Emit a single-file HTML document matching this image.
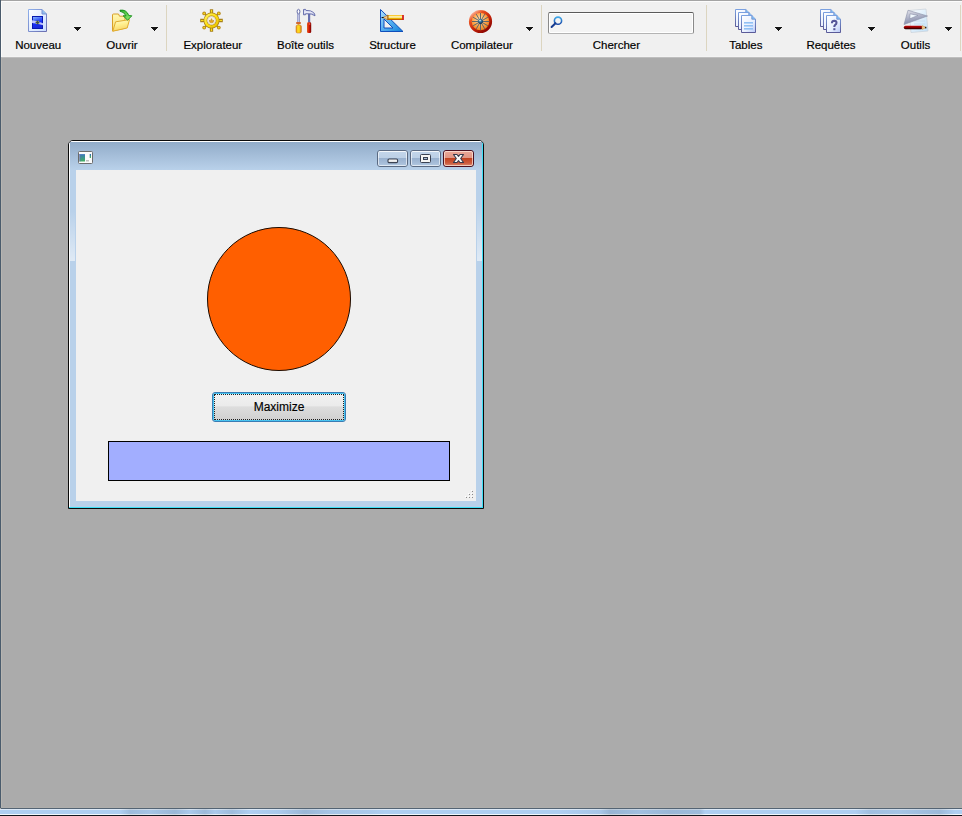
<!DOCTYPE html>
<html><head><meta charset="utf-8">
<style>
html,body{margin:0;padding:0;}
body{width:962px;height:816px;position:relative;overflow:hidden;background:#ababab;font-family:"Liberation Sans",sans-serif;}
.a{position:absolute;}
.lbl{position:absolute;top:38px;font-size:11.5px;line-height:14px;color:#000;-webkit-text-stroke:0.18px #000;white-space:nowrap;text-align:center;width:100px;}
.sep{position:absolute;top:5px;width:1px;height:46px;background:#dcd5c0;}
.dd{position:absolute;top:26px;width:9px;height:6px;}
.dd svg{display:block;}
svg{display:block;}
.tb{width:29px;height:15px;border:1px solid #5a6a82;border-radius:3px;background:linear-gradient(#c3d6eb 0%,#bcd0e6 46%,#98b1cf 47%,#a6bdd8 80%,#b4cae2 100%);}
.tbi{position:absolute;left:0;top:0;right:0;bottom:0;border:1px solid rgba(255,255,255,0.6);border-top-color:rgba(255,255,255,0.8);border-radius:2px;}
.tbc{width:29px;height:15px;border:1px solid #4a1020;border-radius:3px;background:linear-gradient(#eaa898 0%,#e09584 46%,#c0401e 47%,#cc5a3c 80%,#da8a70 100%);}
.tbci{position:absolute;left:0;top:0;right:0;bottom:0;border:1px solid rgba(255,235,225,0.7);border-radius:2px;}
</style></head><body>
<!-- toolbar -->
<div class="a" style="left:0;top:0;width:962px;height:57px;background:#f0f0f0;"></div>
<div class="a" style="left:0;top:0;width:962px;height:1px;background:#a4a4a4;"></div>
<div class="a" style="left:0;top:1px;width:962px;height:1px;background:#fcfcfc;"></div>
<div class="a" style="left:0;top:56px;width:962px;height:1px;background:#f3f3f3;"></div>
<div class="a" style="left:0;top:57px;width:962px;height:1px;background:#bebebe;"></div>
<div class="a" style="left:1px;top:1px;width:1px;height:56px;background:#fbfaf8;"></div>
<!-- MDI edges -->
<div class="a" style="left:1px;top:58px;width:1px;height:750px;background:#b7b5b1;"></div>
<div class="a" style="left:1px;top:807px;width:961px;height:1px;background:#afaeab;"></div>
<div class="a" style="left:0;top:0;width:1px;height:808px;background:#4a5b6c;"></div>
<!-- bottom frame -->
<div class="a" style="left:1px;top:808px;width:961px;height:1px;background:#546474;"></div>
<div class="a" style="left:0;top:809px;width:962px;height:1px;background:#dce9f7;"></div>
<div class="a" style="left:0;top:810px;width:962px;height:4px;background:#afcff2;"></div>
<div class="a" style="left:0;top:814px;width:962px;height:1px;background:#f2f8fd;"></div>
<div class="a" style="left:0;top:815px;width:962px;height:1px;background:#141820;"></div>
<div class="a" style="left:0;top:809px;width:962px;height:6px;background:linear-gradient(90deg, rgba(80,100,120,0) 0px, rgba(80,100,120,0) 120px, rgba(80,100,120,0.18) 130px, rgba(80,100,120,0.1) 150px, rgba(80,100,120,0.22) 175px, rgba(80,100,120,0.05) 190px, rgba(80,100,120,0.2) 205px, rgba(80,100,120,0.05) 215px, rgba(80,100,120,0.18) 232px, rgba(80,100,120,0) 250px, rgba(80,100,120,0.05) 280px, rgba(80,100,120,0.22) 305px, rgba(80,100,120,0.1) 330px, rgba(80,100,120,0.05) 370px, rgba(80,100,120,0) 385px, rgba(80,100,120,0) 560px, rgba(80,100,120,0.08) 600px, rgba(80,100,120,0.25) 610px, rgba(80,100,120,0.15) 640px, rgba(80,100,120,0.22) 670px, rgba(80,100,120,0.18) 700px, rgba(80,100,120,0) 705px, rgba(80,100,120,0) 855px, rgba(80,100,120,0.15) 870px, rgba(80,100,120,0.1) 900px, rgba(80,100,120,0.2) 940px, rgba(80,100,120,0) 955px);"></div>

<!-- separators -->
<div class="sep" style="left:166px"></div>
<div class="sep" style="left:541px"></div>
<div class="sep" style="left:706px"></div>
<div class="sep" style="left:960px"></div>

<!-- dropdown arrows -->
<div class="dd" style="left:73px"><svg width="9" height="6" viewBox="0 0 9 6"><path d="M0.5,0.5 H8.5 L4.5,5.5 Z" fill="#fff" opacity="0.8"/><path d="M1,1 H8 V2 H7 V3 H6 V4 H5 V5 H4 V4 H3 V3 H2 V2 H1 Z" fill="#141414"/></svg></div>
<div class="dd" style="left:150px"><svg width="9" height="6" viewBox="0 0 9 6"><path d="M0.5,0.5 H8.5 L4.5,5.5 Z" fill="#fff" opacity="0.8"/><path d="M1,1 H8 V2 H7 V3 H6 V4 H5 V5 H4 V4 H3 V3 H2 V2 H1 Z" fill="#141414"/></svg></div>
<div class="dd" style="left:525px"><svg width="9" height="6" viewBox="0 0 9 6"><path d="M0.5,0.5 H8.5 L4.5,5.5 Z" fill="#fff" opacity="0.8"/><path d="M1,1 H8 V2 H7 V3 H6 V4 H5 V5 H4 V4 H3 V3 H2 V2 H1 Z" fill="#141414"/></svg></div>
<div class="dd" style="left:774px"><svg width="9" height="6" viewBox="0 0 9 6"><path d="M0.5,0.5 H8.5 L4.5,5.5 Z" fill="#fff" opacity="0.8"/><path d="M1,1 H8 V2 H7 V3 H6 V4 H5 V5 H4 V4 H3 V3 H2 V2 H1 Z" fill="#141414"/></svg></div>
<div class="dd" style="left:867px"><svg width="9" height="6" viewBox="0 0 9 6"><path d="M0.5,0.5 H8.5 L4.5,5.5 Z" fill="#fff" opacity="0.8"/><path d="M1,1 H8 V2 H7 V3 H6 V4 H5 V5 H4 V4 H3 V3 H2 V2 H1 Z" fill="#141414"/></svg></div>
<div class="dd" style="left:944px"><svg width="9" height="6" viewBox="0 0 9 6"><path d="M0.5,0.5 H8.5 L4.5,5.5 Z" fill="#fff" opacity="0.8"/><path d="M1,1 H8 V2 H7 V3 H6 V4 H5 V5 H4 V4 H3 V3 H2 V2 H1 Z" fill="#141414"/></svg></div>

<!-- labels -->
<div class="lbl" style="left:-11.8px">Nouveau</div>
<div class="lbl" style="left:72px">Ouvrir</div>
<div class="lbl" style="left:162.8px">Explorateur</div>
<div class="lbl" style="left:255.5px">Boîte outils</div>
<div class="lbl" style="left:342.5px">Structure</div>
<div class="lbl" style="left:431.9px">Compilateur</div>
<div class="lbl" style="left:566.4px">Chercher</div>
<div class="lbl" style="left:695.8px">Tables</div>
<div class="lbl" style="left:781px">Requêtes</div>
<div class="lbl" style="left:865.5px">Outils</div>


<!-- search box -->
<div class="a" style="left:548px;top:12px;width:144px;height:20px;border-radius:2px;border-top:1px solid #5a5a5a;border-left:1px solid #8a8a8a;border-right:1px solid #8a8a8a;border-bottom:1px solid #b4b4b4;background:#f4f4f4;box-shadow:inset 1px 1px 0 #fff,inset -1px -1px 0 #fff;"></div>

<!-- ICON Nouveau -->
<svg class="a" style="left:28px;top:9px" width="20" height="24" viewBox="0 0 20 24">
  <defs>
    <linearGradient id="nvd" x1="0" y1="0" x2="1" y2="1"><stop offset="0" stop-color="#ffffff"/><stop offset="1" stop-color="#c8dcff"/></linearGradient>
    <linearGradient id="nvb" x1="0" y1="0" x2="0.3" y2="1"><stop offset="0" stop-color="#90c4ff"/><stop offset="0.4" stop-color="#3a5cf8"/><stop offset="0.6" stop-color="#1830f8"/><stop offset="1" stop-color="#1828d8"/></linearGradient>
    <linearGradient id="nvs" x1="0" y1="0" x2="1" y2="1"><stop offset="0" stop-color="#8eb0ec"/><stop offset="1" stop-color="#6a6eb0"/></linearGradient>
  </defs>
  <path d="M0.5,0.5 H14 L18.5,5 V22.5 H0.5 Z" fill="url(#nvd)" stroke="url(#nvs)"/>
  <path d="M14,0.5 V5 H18.5" fill="#90c0f0" stroke="#7890d0"/>
  <rect x="4.5" y="7.5" width="10" height="12" fill="url(#nvb)" stroke="#0818b0"/>
  <path d="M4,11.3 Q9.5,11.8 15,14.2 V16.2 Q9.5,14.3 4,14 Z" fill="#d0d4ff" opacity="0.9"/>
  <circle cx="9.5" cy="13.4" r="1.9" fill="#3a4858"/>
  <g fill="#b0c050"><rect x="8" y="12" width="0.9" height="0.9"/><rect x="10.2" y="12" width="0.9" height="0.9"/><rect x="8" y="14" width="0.9" height="0.9"/><rect x="10.2" y="14" width="0.9" height="0.9"/></g>
</svg>
<!-- ICON Ouvrir -->
<svg class="a" style="left:111px;top:8px" width="22" height="24" viewBox="0 0 22 24">
  <defs>
    <linearGradient id="ofb" x1="0" y1="0" x2="0" y2="1"><stop offset="0" stop-color="#fff8b0"/><stop offset="1" stop-color="#f8dc78"/></linearGradient>
    <linearGradient id="off" x1="0" y1="0" x2="0.3" y2="1"><stop offset="0" stop-color="#fffcd8"/><stop offset="0.5" stop-color="#fff090"/><stop offset="1" stop-color="#f8d468"/></linearGradient>
    <linearGradient id="oar" x1="0" y1="0" x2="1" y2="1"><stop offset="0" stop-color="#30b030"/><stop offset="1" stop-color="#98f070"/></linearGradient>
  </defs>
  <path d="M1.5,23 V7 Q1.5,6 2.5,6 H7.5 L8.5,8.2 H14 V13 L15,20 Z" fill="url(#ofb)" stroke="#d8a028"/>
  <path d="M1.8,23.2 L4.6,13.8 L18.5,11.6 L16.2,20 Z" fill="url(#off)" stroke="#e0ac30" stroke-dasharray="none"/>
  <path d="M9,2.2 Q15.5,1.2 17.8,7.6 L20.8,7.8 L16.6,12.2 L12.2,7.8 L15,7.8 Q13,3.8 9,3.2 Z" fill="url(#oar)" stroke="#0a8a10" stroke-width="0.9" stroke-linejoin="round"/>
</svg>
<!-- ICON Explorateur -->
<svg class="a" style="left:199px;top:8px" width="26" height="26" viewBox="0 0 26 26">
  <defs><linearGradient id="exg" x1="0" y1="0" x2="1" y2="1"><stop offset="0" stop-color="#fff060"/><stop offset="0.5" stop-color="#ffe010"/><stop offset="1" stop-color="#e8c000"/></linearGradient></defs>
  <g stroke="#a88018" stroke-width="3.3" stroke-linecap="butt">
    <path d="M12.5,1.2 V6 M12.5,19 V23.8 M1.2,12.5 H6 M19,12.5 H23.8"/>
  </g>
  <g stroke="#a88018" stroke-width="1.4"><path d="M5.5,5.5 L8,8 M19.5,5.5 L17,8 M5.5,19.5 L8,17 M19.5,19.5 L17,17"/></g>
  <g fill="#b88a18"><circle cx="5.2" cy="5.4" r="1.9"/><circle cx="19.8" cy="5.4" r="1.9"/><circle cx="5.2" cy="19.6" r="1.9"/><circle cx="19.8" cy="19.6" r="1.9"/></g>
  <g fill="#f8d820"><circle cx="5.2" cy="5.4" r="0.9"/><circle cx="19.8" cy="5.4" r="0.9"/><circle cx="5.2" cy="19.6" r="0.9"/><circle cx="19.8" cy="19.6" r="0.9"/></g>
  <g stroke="#f8dc20" stroke-width="1.2">
    <path d="M12.5,2 V5.5 M12.5,19.5 V23 M2,12.5 H5.5 M19.5,12.5 H23"/>
  </g>
  <circle cx="12.5" cy="12.5" r="6.1" fill="none" stroke="#a88018" stroke-width="3.8"/>
  <circle cx="12.5" cy="12.5" r="6.1" fill="none" stroke="url(#exg)" stroke-width="2.4"/>
  <circle cx="12.5" cy="12.5" r="4" fill="#f2efe6"/>
  <circle cx="12.5" cy="12.5" r="4" fill="none" stroke="#d8c090" stroke-width="0.5"/>
  <path d="M10.3,12 L11.3,13.2 L12.5,10.6 L13.7,13.2 L14.7,12 L14.2,14.3 Q12.5,15.2 10.8,14.3 Z" fill="#e8a818" stroke="#b88010" stroke-width="0.5"/>
</svg>
<!-- ICON Boite outils -->
<svg class="a" style="left:294px;top:8px" width="24" height="26" viewBox="0 0 24 26">
  <defs>
    <linearGradient id="bsh" x1="0" y1="0" x2="1" y2="0"><stop offset="0" stop-color="#8088c0"/><stop offset="0.5" stop-color="#c0c4e4"/><stop offset="1" stop-color="#7078b0"/></linearGradient>
    <linearGradient id="byl" x1="0" y1="0" x2="1" y2="0"><stop offset="0" stop-color="#e08820"/><stop offset="0.35" stop-color="#ffe020"/><stop offset="0.7" stop-color="#f8c818"/><stop offset="1" stop-color="#c86810"/></linearGradient>
    <linearGradient id="brd" x1="0" y1="0" x2="1" y2="0"><stop offset="0" stop-color="#e06020"/><stop offset="0.5" stop-color="#d81808"/><stop offset="1" stop-color="#700000"/></linearGradient>
    <linearGradient id="bhm" x1="0" y1="0" x2="0" y2="1"><stop offset="0" stop-color="#b8bce0"/><stop offset="0.45" stop-color="#eeeefa"/><stop offset="1" stop-color="#9098c8"/></linearGradient>
  </defs>
  <rect x="3.2" y="5" width="2.6" height="9" fill="url(#bsh)"/>
  <ellipse cx="4.5" cy="3.6" rx="1.4" ry="2.3" fill="#f0f0f8" stroke="#6870a8" stroke-width="1"/>
  <rect x="4.1" y="2.3" width="0.8" height="2.4" fill="#ffffff"/>
  <rect x="2" y="14" width="5" height="2" rx="0.9" fill="#d06830"/>
  <rect x="3.6" y="16" width="1.8" height="1.2" fill="#e8b040"/>
  <rect x="2" y="17" width="5.4" height="8" rx="1.5" fill="url(#byl)" stroke="#c87018" stroke-width="0.5"/>
  <rect x="14" y="6" width="2.2" height="8.5" fill="#6870b0"/>
  <path d="M9.5,1.5 L11.4,1.3 L12,2.4 Q17,2.2 19.6,4.5 Q21,6 21,7.8 L19.4,7.1 Q18,5.9 15,5.8 L11.6,5.8 L11.4,6.8 L9.5,6.8 Z" fill="url(#bhm)" stroke="#6068a8" stroke-width="0.9" stroke-linejoin="round"/>
  <rect x="13" y="14.2" width="4.2" height="10.8" rx="1.3" fill="url(#brd)"/>
  <circle cx="15.6" cy="16" r="0.9" fill="#ff6040" opacity="0.8"/>
</svg>
<!-- ICON Structure -->
<svg class="a" style="left:379px;top:8px" width="28" height="26" viewBox="0 0 28 26">
  <defs>
    <linearGradient id="stg" x1="0" y1="0" x2="1" y2="1"><stop offset="0" stop-color="#b0e0ff"/><stop offset="0.5" stop-color="#58b0f0"/><stop offset="1" stop-color="#1080d8"/></linearGradient>
    <linearGradient id="spn" x1="0" y1="0" x2="0" y2="1"><stop offset="0" stop-color="#f8b800"/><stop offset="0.4" stop-color="#ffffd8"/><stop offset="0.7" stop-color="#e8b000"/><stop offset="1" stop-color="#b03000"/></linearGradient>
  </defs>
  <path d="M1.5,1.5 L24,23.5 H1.5 Z M5,11 V20 H14 Z" fill="url(#stg)" fill-rule="evenodd" stroke="#0848b8" stroke-width="0.95" stroke-linejoin="round"/>
  <rect x="8.5" y="7" width="15" height="5" fill="url(#spn)"/>
  <rect x="23.2" y="7" width="1.6" height="5" fill="#d00808"/>
  <path d="M9,7 L4,9.5 L9,12 Z" fill="#f0c890" stroke="#a86818" stroke-width="0.6"/>
  <rect x="8.4" y="7" width="0.9" height="5" fill="#a06010"/>
  <rect x="2.6" y="9" width="2" height="1.1" fill="#101010"/>
</svg>
<!-- ICON Compilateur -->
<svg class="a" style="left:468px;top:9px" width="25" height="25" viewBox="0 0 25 25">
  <defs>
    <radialGradient id="cpi" cx="0.45" cy="0.4" r="0.6"><stop offset="0" stop-color="#ffe4b8"/><stop offset="0.5" stop-color="#ffa850"/><stop offset="0.82" stop-color="#f08828"/><stop offset="1" stop-color="#985810"/></radialGradient>
    <linearGradient id="cpr" x1="0.1" y1="0" x2="0.9" y2="1"><stop offset="0" stop-color="#ffc8b0"/><stop offset="0.25" stop-color="#e85020"/><stop offset="0.6" stop-color="#c02008"/><stop offset="1" stop-color="#800000"/></linearGradient>
    <radialGradient id="cph" cx="0.4" cy="0.3" r="0.7"><stop offset="0" stop-color="#ffffff"/><stop offset="0.35" stop-color="#4080a8"/><stop offset="1" stop-color="#0a2848"/></radialGradient>
  </defs>
  <circle cx="12.5" cy="12.5" r="10.2" fill="url(#cpi)" stroke="url(#cpr)" stroke-width="2.8"/>
  <g stroke="#4a6070" stroke-width="0.9">
    <path d="M12.5,4 V21 M4,12.5 H21 M8.25,5.14 L16.75,19.86 M16.75,5.14 L8.25,19.86 M5.14,8.25 L19.86,16.75 M5.14,16.75 L19.86,8.25"/>
  </g>
  <circle cx="12.5" cy="12.5" r="2.4" fill="url(#cph)"/>
</svg>
<!-- ICON search magnifier -->
<svg class="a" style="left:550px;top:16px" width="14" height="14" viewBox="0 0 14 14">
  <defs><linearGradient id="mgg" x1="0" y1="0" x2="0" y2="1"><stop offset="0" stop-color="#40a8e8"/><stop offset="1" stop-color="#1848a8"/></linearGradient></defs>
  <circle cx="8" cy="4.7" r="3.6" fill="none" stroke="url(#mgg)" stroke-width="1.6"/>
  <path d="M5.5,7.2 L1.6,11" stroke="#183c90" stroke-width="2" stroke-linecap="round"/>
</svg>
<!-- ICON Tables -->
<svg class="a" style="left:734px;top:8px" width="24" height="26" viewBox="0 0 24 26">
  <defs>
    <linearGradient id="pgf" x1="0" y1="0" x2="1" y2="1"><stop offset="0" stop-color="#ffffff"/><stop offset="0.6" stop-color="#e8f0ff"/><stop offset="1" stop-color="#b8c8f8"/></linearGradient>
    <linearGradient id="pgs" x1="0" y1="0" x2="0" y2="1"><stop offset="0" stop-color="#7aa0e0"/><stop offset="1" stop-color="#5a5a98"/></linearGradient>
    <g id="page">
      <path d="M0.5,0.5 H10.8 L14.5,4.2 V17.5 H0.5 Z" fill="url(#pgf)" stroke="url(#pgs)" stroke-width="1"/>
      <path d="M10.8,0.5 V4.2 H14.5" fill="#80c0f8" stroke="#6a88c8" stroke-width="0.8"/>
    </g>
  </defs>
  <use href="#page" x="1" y="1"/>
  <use href="#page" x="4" y="4"/>
  <use href="#page" x="7" y="7"/>
  <g fill="#90c0f4"><rect x="10" y="14" width="9" height="1.6"/><rect x="10" y="17" width="9" height="1.6"/><rect x="10" y="20" width="9" height="1.6"/></g>
</svg>
<!-- ICON Requetes -->
<svg class="a" style="left:819px;top:8px" width="24" height="26" viewBox="0 0 24 26">
  <use href="#page" x="1" y="1"/>
  <use href="#page" x="4" y="4"/>
  <use href="#page" x="7" y="7"/>
  <path d="M12.9,15.2 Q13,12.8 15.3,12.8 Q17.5,12.9 17.5,14.8 Q17.5,16.1 16.2,16.9 Q15.3,17.5 15.3,19" fill="none" stroke="#56569a" stroke-width="2.1"/>
  <rect x="14.3" y="20.2" width="2.1" height="2" fill="#56569a"/>
</svg>
<!-- ICON Outils -->
<svg class="a" style="left:902px;top:8px" width="28" height="26" viewBox="0 0 28 26">
  <defs>
    <linearGradient id="otp" x1="0" y1="0" x2="1" y2="1"><stop offset="0" stop-color="#ffffff"/><stop offset="1" stop-color="#c0e0f8"/></linearGradient>
    <linearGradient id="otr" x1="0" y1="0" x2="0.3" y2="1"><stop offset="0" stop-color="#e4e4ec"/><stop offset="1" stop-color="#8088a8"/></linearGradient>
    <linearGradient id="otpn" x1="0" y1="0" x2="0" y2="1"><stop offset="0" stop-color="#c80808"/><stop offset="0.45" stop-color="#900000"/><stop offset="1" stop-color="#100000"/></linearGradient>
  </defs>
  <path d="M7,2.5 L24,1 L26,23 L9,24.5 Z" fill="url(#otp)" stroke="#c8d0d8" stroke-width="0.7"/>
  <g stroke="#c0d4e8" stroke-width="0.6"><path d="M12,13 H23 M12,16 H23 M12,19 H24"/></g>
  <path d="M2,16.5 L6,2.25 L25.5,8 Z M8,5.8 L16,7.4 L7.8,10.8 Z" fill="url(#otr)" fill-rule="evenodd" stroke="#8a90a8" stroke-width="0.6" stroke-linejoin="round"/>
  <rect x="1.8" y="17.7" width="19" height="3.6" rx="1.7" fill="url(#otpn)"/>
  <path d="M20,17.6 L23.2,19 L23.2,20 L20,21.4 Z" fill="#f0c890" stroke="#c08840" stroke-width="0.5"/>
  <rect x="23" y="18.8" width="1.4" height="1.6" fill="#302010"/>
</svg>
<!-- MDI child window -->
<div class="a" style="left:68px;top:140px;width:414px;height:367px;border:1px solid #0a0a0a;border-radius:5px 5px 0 0;background:#b9d1ea;overflow:hidden;">
  <div class="a" style="left:0;top:0;width:414px;height:1px;background:#fff;"></div>
  <div class="a" style="left:0;top:0;width:1px;height:367px;background:#fff;"></div>
  <div class="a" style="left:413px;top:0;width:1px;height:367px;background:#3ee0f6;"></div>
  <div class="a" style="left:0;top:366px;width:414px;height:1px;background:#3ee0f6;"></div>
  <div class="a" style="left:1px;top:1px;width:412px;height:28px;background:linear-gradient(#92acc9,#b9d1ea);"></div>
  <div class="a" style="left:1px;top:70px;width:5px;height:50px;background:linear-gradient(rgba(255,255,255,0),rgba(255,255,255,0.55));"></div>
  <div class="a" style="left:408px;top:63px;width:5px;height:57px;background:linear-gradient(rgba(255,255,255,0),rgba(255,255,255,0.55));"></div>
  <div class="a" style="left:7px;top:29px;width:400px;height:331px;background:#f0f0f0;"></div>
</div>


<!-- window icon -->
<svg class="a" style="left:78px;top:151px" width="15" height="13" viewBox="0 0 15 13">
  <defs><linearGradient id="wg" x1="0" y1="0" x2="0" y2="1"><stop offset="0" stop-color="#3a78b8"/><stop offset="1" stop-color="#40b060"/></linearGradient>
  <linearGradient id="wg2" x1="0" y1="0" x2="0" y2="1"><stop offset="0" stop-color="#2a60c0"/><stop offset="1" stop-color="#50c050"/></linearGradient></defs>
  <rect x="0.5" y="0.5" width="14" height="12" rx="1" fill="#fbfbfb" stroke="#6c6c6c"/>
  <rect x="1.5" y="3" width="5.5" height="7.5" fill="url(#wg)"/>
  <rect x="1.5" y="3" width="0.8" height="7.5" fill="#6a68b0"/>
  <rect x="1.5" y="3" width="5.5" height="0.8" fill="#5a88c8"/>
  <rect x="11.7" y="3" width="1.3" height="4" fill="url(#wg2)"/>
  <rect x="8" y="9" width="3" height="1.5" fill="#c0c0c0"/>
</svg>
<!-- title buttons -->
<div class="a tb" style="left:377px;top:150px;"><div class="tbi"></div></div>
<div class="a tb" style="left:410px;top:150px;"><div class="tbi"></div></div>
<div class="a tbc" style="left:443px;top:150px;"><div class="tbci"></div></div>
<!-- min glyph -->
<svg class="a" style="left:386.5px;top:157.5px" width="12" height="6" viewBox="0 0 12 6"><defs><linearGradient id="mng" x1="0" y1="0" x2="0" y2="1"><stop offset="0" stop-color="#ffffff"/><stop offset="1" stop-color="#dcdcdc"/></linearGradient></defs><rect x="1" y="1" width="9.6" height="3.6" rx="1.2" fill="url(#mng)" stroke="#3a4252" stroke-width="1.1"/></svg>
<!-- max glyph -->
<div class="a" style="left:420px;top:154px;width:9px;height:7px;border:1px solid #3a4252;border-radius:1.5px;background:#f6f6f4;"></div>
<div class="a" style="left:423px;top:157px;width:3px;height:1px;border:1px solid #3a4252;background:#a8bcd4;"></div>
<!-- close glyph -->
<svg class="a" style="left:452px;top:153px" width="13" height="11" viewBox="0 0 13 11">
  <path d="M1.5,1.5 L5,1.5 L6.5,3.3 L8,1.5 L11.5,1.5 L8.7,5.5 L11.5,9.5 L8,9.5 L6.5,7.7 L5,9.5 L1.5,9.5 L4.3,5.5 Z" fill="#f8f8f8" stroke="#363a4c" stroke-width="1.1" stroke-linejoin="round"/>
</svg>
<!-- circle -->
<div class="a" style="left:207px;top:227px;width:142px;height:142px;border:1px solid #1a0a00;border-radius:50%;background:#ff5f00;"></div>
<!-- button -->
<div class="a" style="left:212px;top:392px;width:132px;height:28px;border:1px solid #3a7cb4;border-radius:3px;box-shadow:inset 0 0 0 1px #48c4f0;background:linear-gradient(#f2f2f2 0%,#ebebeb 45%,#dddddd 50%,#cfcfcf 100%);"></div>
<div class="a" style="left:214px;top:394px;width:128px;height:24px;border:1px dotted #202020;box-sizing:border-box;width:130px;height:26px;"></div>
<div class="a" style="left:212px;top:400px;width:134px;text-align:center;font-size:12px;line-height:14px;color:#000;-webkit-text-stroke:0.15px #000;">Maximize</div>
<!-- blue rect -->
<div class="a" style="left:108px;top:441px;width:340px;height:38px;border:1px solid #000;background:#a2aeff;"></div>
<!-- grip -->
<svg class="a" style="left:465px;top:490px" width="9" height="9" viewBox="0 0 9 9">
  <g fill="#fff"><rect x="6" y="0" width="1" height="1"/><rect x="3" y="3" width="1" height="1"/><rect x="6" y="3" width="1" height="1"/><rect x="0" y="6" width="1" height="1"/><rect x="3" y="6" width="1" height="1"/><rect x="6" y="6" width="1" height="1"/></g>
  <g fill="#8a8a8a"><rect x="7" y="1" width="1" height="1"/><rect x="4" y="4" width="1" height="1"/><rect x="7" y="4" width="1" height="1"/><rect x="1" y="7" width="1" height="1"/><rect x="4" y="7" width="1" height="1"/><rect x="7" y="7" width="1" height="1"/></g>
</svg>

</body></html>
